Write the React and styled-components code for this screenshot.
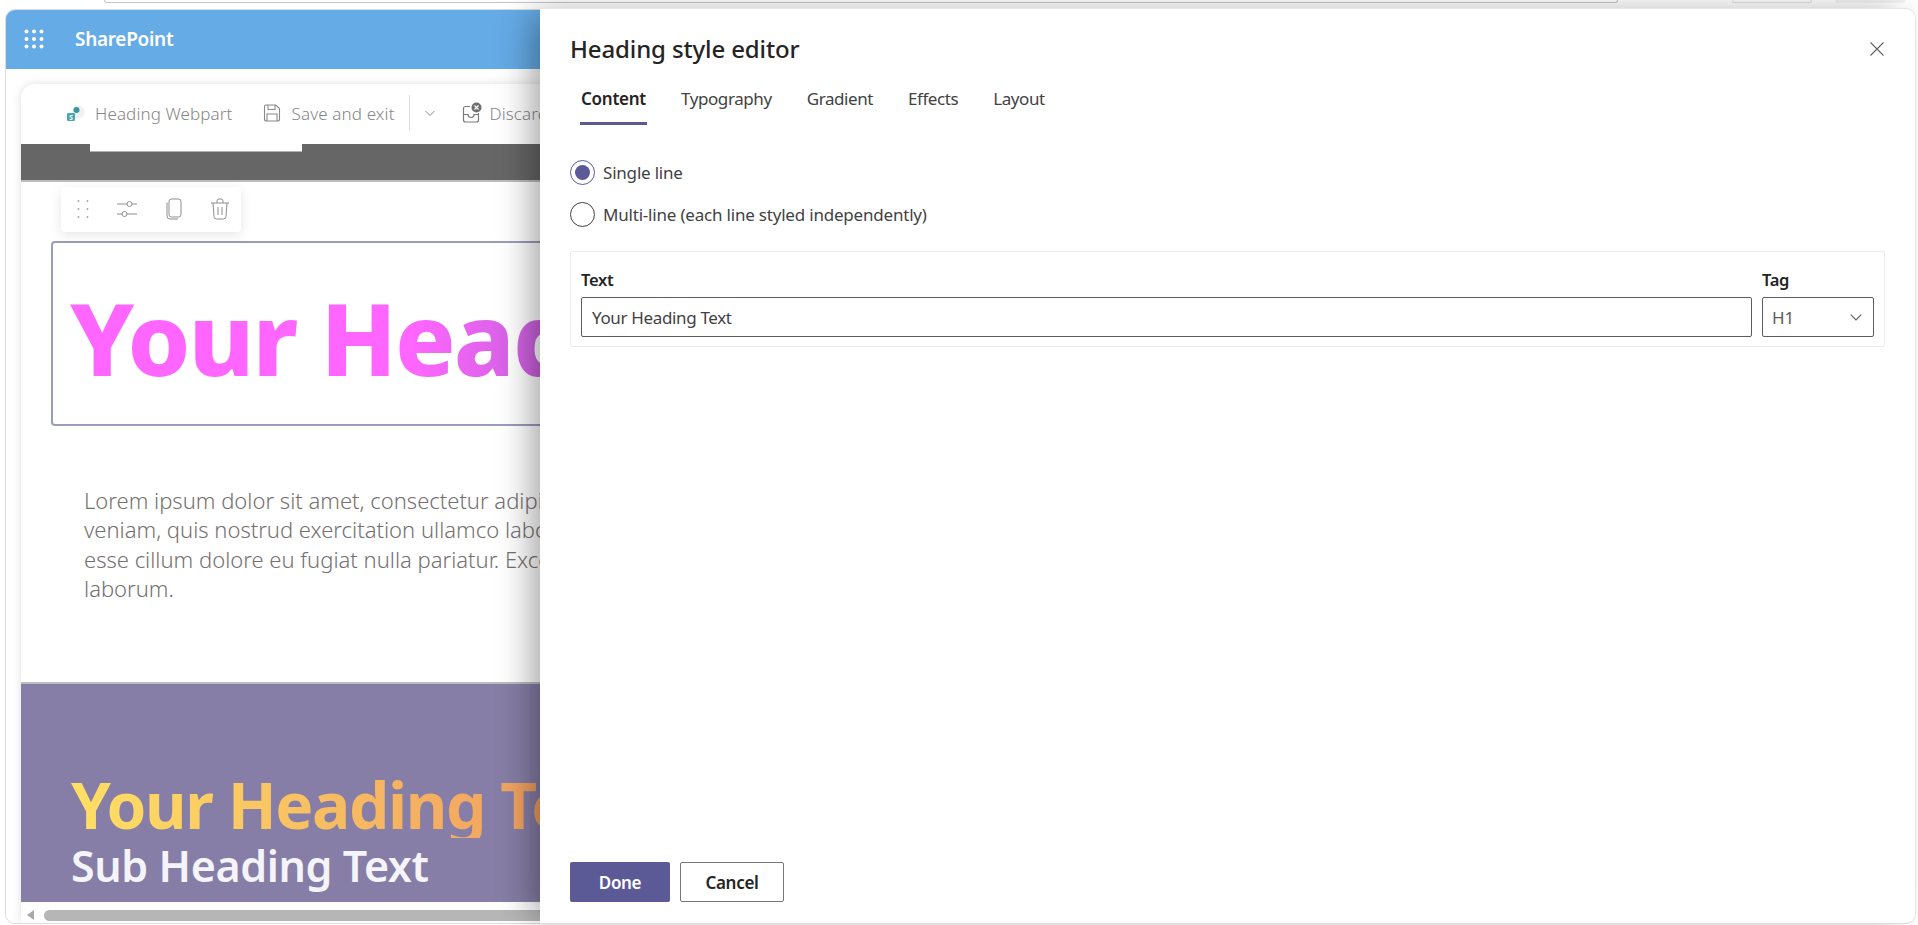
import React from "react";
import styled, { createGlobalStyle } from "styled-components";

const GlobalStyle = createGlobalStyle`
  html, body {
    margin: 0;
    padding: 0;
    height: 100%;
    overflow: hidden;
    background: #fff;
    font-family: "Noto Sans", "Open Sans", sans-serif;
  }
  * { box-sizing: border-box; }
`;

const Page = styled.div`
  position: relative;
  width: 1918px;
  height: 925px;
  overflow: hidden;
  background: #fff;
`;

const BrowserStrip = styled.div`
  height: 9px;
  display: flex;
  align-items: flex-start;
  padding-left: 104px;
`;

const AddressEdge = styled.div`
  width: 1514px;
  height: 3px;
  border: 1px solid #c9c4c9;
  border-top: 0;
  border-radius: 0 0 8px 8px;
`;

const ProfilePill = styled.div`
  width: 80px;
  height: 3px;
  margin-left: 114px;
  border: 1px solid #dedede;
  border-top: 0;
  border-radius: 0 0 8px 8px;
`;

const MenuPill = styled.div`
  width: 70px;
  height: 3px;
  margin-left: 23px;
  background: #f3f3f3;
  border-radius: 0 0 6px 6px;
`;

const WindowFrame = styled.div`
  width: 560px;
  height: 915px;
  margin-left: 5px;
  border: 1px solid #dcdcdc;
  border-radius: 10px;
  overflow: hidden;
  display: flex;
  flex-direction: column;
  background: #f8f8f8;
`;

const SuiteBar = styled.header`
  height: 59px;
  flex: none;
  display: flex;
  align-items: center;
  padding: 0 0 2px 18px;
  gap: 31px;
  background: #65abe6;
  color: #fff;
`;

const SuiteTitle = styled.span`
  font-size: 19px;
  font-weight: 600;
  letter-spacing: -0.3px;
`;

const CanvasArea = styled.div`
  flex: 1;
  min-height: 0;
  padding: 15px 0 0 15px;
  background: #fff;
`;

const Card = styled.div`
  height: 100%;
  display: flex;
  flex-direction: column;
  background: #fff;
  border-radius: 14px 0 0 0;
  box-shadow: 0 0 8px rgba(0, 0, 0, 0.13);
  overflow: hidden;
  white-space: nowrap;
`;

const CommandBar = styled.div`
  height: 60px;
  flex: none;
  display: flex;
  align-items: center;
  padding: 0 0 2px 44px;
  color: #868686;
  font-size: 17px;
  font-weight: 300;
  overflow: hidden;
`;

const CommandItem = styled.div`
  flex: none;
  display: flex;
  align-items: center;
  gap: ${(p) => p.$gap || 10}px;
  margin-left: ${(p) => p.$left || 0}px;
  letter-spacing: ${(p) => p.$spacing || 0.1}px;
`;

const CommandDivider = styled.div`
  flex: none;
  width: 1px;
  height: 36px;
  margin-left: 14px;
  background: #dedede;
`;

const Band = styled.div`
  height: 38px;
  flex: none;
  background: #666;
  border-bottom: 2px solid #bcbcbc;
`;

const BandTab = styled.div`
  width: 212px;
  height: 8px;
  margin-left: 69px;
  background: #fff;
  border-bottom: 1px solid #b0b0b0;
`;

const EditSection = styled.section`
  position: relative;
  height: 500px;
  flex: none;
  padding: 59px 0 0 30px;
`;

const FloatingTools = styled.div`
  position: absolute;
  left: 40px;
  top: 5px;
  width: 180px;
  height: 45px;
  display: flex;
  align-items: center;
  gap: 27px;
  padding: 0 0 2px 16px;
  background: #fff;
  border-radius: 4px;
  box-shadow: 0 3px 12px rgba(0, 0, 0, 0.1);
  color: #8e8e8e;
`;

const HeadingBox = styled.div`
  width: 1000px;
  height: 185px;
  display: flex;
  align-items: center;
  padding: 7px 0 0 17px;
  border: 2px solid #9b9bbd;
  border-radius: 4px;
`;

const BigHeading = styled.h1`
  margin: 0;
  font-size: 100px;
  font-weight: 800;
  line-height: 1.2;
  letter-spacing: -1.9px;
  color: transparent;
  background: linear-gradient(90deg, #ff66ff 0, #ff66ff 340px, #c060d8 500px, #7a50c0 900px);
  background-clip: text;
  -webkit-background-clip: text;
`;

const BodyCopy = styled.p`
  margin: 60px 0 0 33px;
  font-size: 22px;
  font-weight: 300;
  line-height: 29.4px;
  color: #757070;
`;

const HeroBand = styled.section`
  height: 220px;
  flex: none;
  display: flex;
  flex-direction: column;
  justify-content: flex-end;
  padding: 0 0 8px 50px;
  background: #867ea6;
  border-top: 2px solid #bcbcbc;
`;

const HeroTitle = styled.h2`
  margin: 0;
  align-self: flex-start;
  font-size: 64px;
  font-weight: 700;
  line-height: 66px;
  letter-spacing: -1.4px;
  color: transparent;
  background: linear-gradient(90deg, #ffe064 0, #f09c60 500px, #d87050 900px);
  background-clip: text;
  -webkit-background-clip: text;
`;

const HeroSub = styled.h3`
  margin: 0;
  font-size: 43px;
  font-weight: 600;
  line-height: 56px;
  letter-spacing: -0.4px;
  color: #f4f4fa;
`;

const ScrollTrack = styled.div`
  flex: 1;
  min-height: 0;
  display: flex;
  align-items: flex-end;
  padding: 0 0 2px 6px;
  gap: 4px;
  background: #fff;
`;

const ScrollArrow = styled.div`
  flex: none;
  width: 0;
  height: 0;
  margin-bottom: 1px;
  border: 5px solid transparent;
  border-left: 0;
  border-right: 7px solid #a8a8a8;
`;

const ScrollThumb = styled.div`
  flex: none;
  width: 1500px;
  height: 11px;
  margin-left: 6px;
  background: #b6b6b6;
  border-radius: 6px;
`;

const Panel = styled.aside`
  position: absolute;
  left: 540px;
  top: 8px;
  right: 2px;
  bottom: 1px;
  display: flex;
  flex-direction: column;
  padding: 0 30px 21px 30px;
  background: #fff;
  border-radius: 0 10px 10px 0;
  border-top: 1px solid #e6e6e6;
  border-right: 1px solid #e6e6e6;
  border-bottom: 1px solid #dcdcdc;
  box-shadow: -14px 0 34px -6px rgba(0, 0, 0, 0.36);
  color: #242424;
`;

const PanelHeader = styled.div`
  height: 64px;
  flex: none;
  display: flex;
  align-items: center;
  justify-content: space-between;
  padding-top: 14px;
`;

const PanelTitle = styled.h2`
  margin: 0;
  font-size: 24px;
  font-weight: 500;
  letter-spacing: -0.13px;
  color: #242424;
`;

const CloseButton = styled.button`
  display: flex;
  margin: 2px 1px 0 0;
  padding: 0;
  border: 0;
  background: none;
  color: #616161;
`;

const TabRow = styled.nav`
  display: flex;
  gap: 33px;
  height: 52px;
  flex: none;
  padding-left: 10px;
`;

const Tab = styled.div`
  height: 52px;
  padding: 15px 1px 0;
  font-size: 17px;
  line-height: 22px;
  font-weight: ${(p) => (p.$active ? 600 : 400)};
  letter-spacing: ${(p) => (p.$active ? -0.25 : -0.42)}px;
  color: ${(p) => (p.$active ? "#242424" : "#424242")};
  border-bottom: 3px solid ${(p) => (p.$active ? "#5b5a97" : "transparent")};
`;

const RadioGroup = styled.div`
  display: flex;
  flex-direction: column;
  gap: 16px;
  margin-top: 34px;
`;

const RadioRow = styled.label`
  display: flex;
  align-items: center;
  gap: 8px;
  height: 26px;
  font-size: 17px;
  letter-spacing: -0.2px;
  color: #424242;
`;

const RadioCircle = styled.span`
  width: 25px;
  height: 25px;
  flex: none;
  display: flex;
  align-items: center;
  justify-content: center;
  border-radius: 50%;
  border: 1px solid ${(p) => (p.$checked ? "#5b5a97" : "#424242")};

  &::after {
    content: "";
    display: ${(p) => (p.$checked ? "block" : "none")};
    width: 15px;
    height: 15px;
    border-radius: 50%;
    background: #5b5a97;
  }
`;

const FieldGroup = styled.div`
  display: flex;
  gap: 10px;
  height: 96px;
  margin-top: 24px;
  padding: 17px 10px 0;
  border: 1px solid #ececec;
  border-radius: 2px;
`;

const FieldColumn = styled.div`
  display: flex;
  flex-direction: column;
  flex: ${(p) => (p.$grow ? 1 : "none")};
  width: ${(p) => (p.$grow ? "auto" : "112px")};
`;

const FieldLabel = styled.label`
  height: 28px;
  font-size: 16.5px;
  line-height: 22px;
  font-weight: 600;
  letter-spacing: -0.3px;
  color: #242424;
`;

const TextInput = styled.input`
  width: 100%;
  height: 40px;
  padding: 1px 10px 0;
  border: 1px solid #5c5c5c;
  border-radius: 2px;
  font: inherit;
  font-size: 17px;
  letter-spacing: -0.35px;
  color: #424242;
  outline: none;
`;

const SelectBox = styled.div`
  height: 40px;
  display: flex;
  align-items: center;
  justify-content: space-between;
  padding: 0 10px 0 9px;
  border: 1px solid #5c5c5c;
  border-radius: 2px;
  font-size: 17px;
  color: #5c5c5c;
`;

const Footer = styled.div`
  margin-top: auto;
  display: flex;
  gap: 10px;
`;

const PrimaryButton = styled.button`
  width: 100px;
  height: 40px;
  border: 0;
  border-radius: 2px;
  background: #5b5a97;
  color: #fff;
  font: inherit;
  font-size: 17px;
  font-weight: 600;
  letter-spacing: -0.3px;
`;

const GhostButton = styled.button`
  width: 104px;
  height: 40px;
  background: #fff;
  border: 1px solid #777;
  border-radius: 2px;
  color: #242424;
  font: inherit;
  font-size: 17px;
  font-weight: 600;
  letter-spacing: -0.3px;
`;

const WaffleIcon = () => (
  <svg width="20" height="20" viewBox="0 0 20 20" fill="currentColor">
    {[2.5, 10, 17.5].map((y) =>
      [2.5, 10, 17.5].map((x) => <circle key={`${x}-${y}`} cx={x} cy={y} r="2" />)
    )}
  </svg>
);

const SharePointIcon = () => (
  <svg width="20" height="20" viewBox="0 0 20 20">
    <circle cx="13" cy="9" r="6.5" fill="#eef1f1" />
    <circle cx="11.5" cy="7" r="3" fill="#3c95a0" />
    <rect x="2" y="10" width="8" height="8" rx="1.2" fill="#4aa8b4" />
    <text x="6" y="16.5" fontSize="6.5" fontWeight="700" fill="#fff" textAnchor="middle">S</text>
  </svg>
);

const SaveIcon = () => (
  <svg width="20" height="20" viewBox="0 0 20 20" fill="none" stroke="#8a8a8a" strokeWidth="1.1">
    <path d="M3.5 2h10.2L17.5 5.6V16a2 2 0 0 1-2 2h-11a2 2 0 0 1-2-2V4a2 2 0 0 1 1-2z" />
    <path d="M6 2v4.5h7V2" />
    <path d="M5 18v-7h10v7" />
  </svg>
);

const ChevronIcon = ({ size = 12, color = "#8a8a8a" }) => (
  <svg width={size} height={size} viewBox="0 0 12 12" fill="none" stroke={color} strokeWidth="1">
    <path d="M1.5 4l4.5 4.5L10.5 4" />
  </svg>
);

const DiscardIcon = () => (
  <svg width="22" height="22" viewBox="0 0 22 22" fill="none">
    <path d="M9 4.5H4.5a2 2 0 0 0-2 2V18a2 2 0 0 0 2 2h11a2 2 0 0 0 2-2V11" stroke="#7a7a7a" strokeWidth="1.2" />
    <path d="M2.5 12.5h4.5a3 3 0 0 0 6 0h4.5" stroke="#7a7a7a" strokeWidth="1.2" />
    <circle cx="15.5" cy="5.5" r="5" fill="#6e6e6e" />
    <path d="M13.5 3.5l4 4m0-4l-4 4" stroke="#fff" strokeWidth="1.2" />
  </svg>
);

const DragIcon = () => (
  <svg width="12" height="20" viewBox="0 0 12 20" fill="#a0a0a0">
    {[2, 10, 18].map((y) =>
      [1.5, 10.5].map((x) => <circle key={`${x}-${y}`} cx={x} cy={y} r="0.9" />)
    )}
  </svg>
);

const SlidersIcon = () => (
  <svg width="22" height="20" viewBox="0 0 22 20" fill="none" stroke="#8e8e8e" strokeWidth="1">
    <path d="M1 5h10m5 0h5M1 15h5m5 0h10" />
    <circle cx="13.5" cy="5" r="2.5" />
    <circle cx="8.5" cy="15" r="2.5" />
  </svg>
);

const CopyIcon = () => (
  <svg width="18" height="22" viewBox="0 0 18 22" fill="none" stroke="#8e8e8e" strokeWidth="1">
    <rect x="4" y="1" width="12" height="18" rx="2.5" />
    <path d="M2 4.5V18a3 3 0 0 0 3 3h8" />
  </svg>
);

const TrashIcon = () => (
  <svg width="20" height="22" viewBox="0 0 20 22" fill="none" stroke="#8e8e8e" strokeWidth="1">
    <path d="M1 5h18M7 5V3a2 2 0 0 1 2-2h2a2 2 0 0 1 2 2v2" />
    <path d="M3 5l1 13.5A2.5 2.5 0 0 0 6.5 21h7a2.5 2.5 0 0 0 2.5-2.5L17 5" />
    <path d="M8 9v8M12 9v8" />
  </svg>
);

const CloseIcon = () => (
  <svg width="14" height="14" viewBox="0 0 14 14" fill="none" stroke="currentColor" strokeWidth="1.1">
    <path d="M0.5 0.5l13 13M13.5 0.5l-13 13" />
  </svg>
);

const tabs = ["Content", "Typography", "Gradient", "Effects", "Layout"];

export default function App() {
  return (
    <Page>
      <GlobalStyle />
      <BrowserStrip>
        <AddressEdge />
        <ProfilePill />
        <MenuPill />
      </BrowserStrip>
      <WindowFrame>
        <SuiteBar>
          <WaffleIcon />
          <SuiteTitle>SharePoint</SuiteTitle>
        </SuiteBar>
        <CanvasArea>
          <Card>
            <CommandBar>
              <CommandItem>
                <SharePointIcon />
                Heading Webpart
              </CommandItem>
              <CommandItem $left={30} $gap={9} $spacing={0.13}>
                <SaveIcon />
                Save and exit
              </CommandItem>
              <CommandDivider />
              <CommandItem $left={14}>
                <ChevronIcon />
              </CommandItem>
              <CommandItem $left={25} $gap={7}>
                <DiscardIcon />
                Discard changes
              </CommandItem>
            </CommandBar>
            <Band>
              <BandTab />
            </Band>
            <EditSection>
              <FloatingTools>
                <DragIcon />
                <SlidersIcon />
                <CopyIcon />
                <TrashIcon />
              </FloatingTools>
              <HeadingBox>
                <BigHeading>Your Heading Text</BigHeading>
              </HeadingBox>
              <BodyCopy>
                Lorem ipsum dolor sit amet, consectetur adipiscing elit, sed do eiusmod tempor incididunt ut labore et dolore magna aliqua. Ut enim ad minim
                <br />
                veniam, quis nostrud exercitation ullamco laboris nisi ut aliquip ex ea commodo consequat. Duis aute irure dolor in reprehenderit in voluptate velit
                <br />
                esse cillum dolore eu fugiat nulla pariatur. Excepteur sint occaecat cupidatat non proident, sunt in culpa qui officia deserunt mollit anim id est
                <br />
                laborum.
              </BodyCopy>
            </EditSection>
            <HeroBand>
              <HeroTitle>Your Heading Text</HeroTitle>
              <HeroSub>Sub Heading Text</HeroSub>
            </HeroBand>
            <ScrollTrack>
              <ScrollArrow />
              <ScrollThumb />
            </ScrollTrack>
          </Card>
        </CanvasArea>
      </WindowFrame>

      <Panel>
        <PanelHeader>
          <PanelTitle>Heading style editor</PanelTitle>
          <CloseButton aria-label="Close">
            <CloseIcon />
          </CloseButton>
        </PanelHeader>
        <TabRow>
          {tabs.map((t) => (
            <Tab key={t} $active={t === "Content"}>{t}</Tab>
          ))}
        </TabRow>
        <RadioGroup>
          <RadioRow>
            <RadioCircle $checked />
            Single line
          </RadioRow>
          <RadioRow>
            <RadioCircle />
            Multi-line (each line styled independently)
          </RadioRow>
        </RadioGroup>
        <FieldGroup>
          <FieldColumn $grow>
            <FieldLabel>Text</FieldLabel>
            <TextInput defaultValue="Your Heading Text" />
          </FieldColumn>
          <FieldColumn>
            <FieldLabel>Tag</FieldLabel>
            <SelectBox>
              H1
              <ChevronIcon size={14} color="#616161" />
            </SelectBox>
          </FieldColumn>
        </FieldGroup>
        <Footer>
          <PrimaryButton>Done</PrimaryButton>
          <GhostButton>Cancel</GhostButton>
        </Footer>
      </Panel>
    </Page>
  );
}
